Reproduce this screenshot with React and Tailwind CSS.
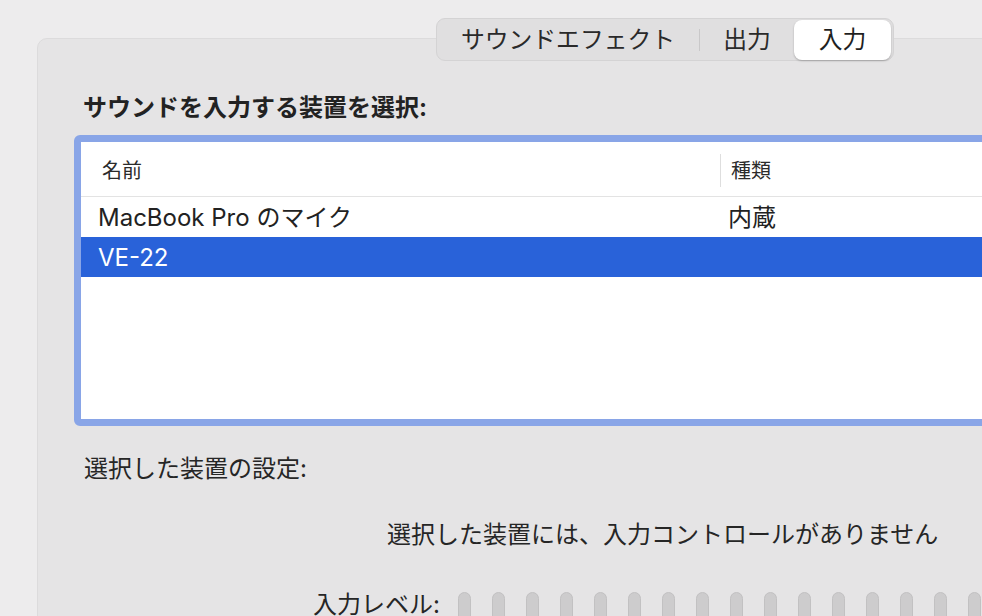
import React from "react";

const font = { fontFamily: 'Inter, "Noto Sans CJK JP", sans-serif' };

const Tabs = () => {
	return (
		<div className="ml-[362px] -mt-[21px] flex h-[43px] w-[458px] items-center rounded-[9px] border border-[#d4d3d4] bg-[#e0dfe0]">
			<div className="flex h-full w-[262px] items-center justify-center text-[23.8px] text-[#2a2a2a]">
				サウンドエフェクト
			</div>
			<div className="h-[22px] w-px bg-[#c9c8c9]" />
			<div className="flex h-full w-[94px] items-center justify-center text-[23.8px] text-[#2a2a2a]">
				出力
			</div>
			<div className="flex h-[40px] w-[97px] items-center justify-center rounded-[8px] bg-white text-[23.8px] text-[#1f1f1f] shadow-[0_1px_2px_rgba(0,0,0,0.25)]">
				入力
			</div>
		</div>
	);
};

const DeviceTable = () => {
	return (
		<div className="mt-[11px] h-[291px] w-[1000px] rounded-[6px] border-[7px] border-[#89a5e7] bg-white">
			<div className="flex h-[55px] items-center border-b border-[#e3e3e3] pt-[3px]">
				<div className="w-[639px] pl-[21px] text-[20px] text-[#2b2b2b]">名前</div>
				<div className="h-[33px] w-px bg-[#dedede]" />
				<div className="pl-[10px] text-[20px] text-[#2b2b2b]">種類</div>
			</div>
			<div className="flex h-[40px] items-center pt-[1px] text-[24px] text-[#222]">
				<div className="w-[647px] pl-[17px]">MacBook Pro のマイク</div>
				<div>内蔵</div>
			</div>
			<div className="flex h-[40px] items-center pt-[1px] bg-[#2962d9] text-[24px] text-white">
				<div className="w-[647px] pl-[17px]">VE-22</div>
			</div>
		</div>
	);
};

const LevelMeter = () => {
	const pills = Array.from({ length: 16 });
	return (
		<div className="mt-[41px] flex h-[26px] items-start">
			<div className="ml-[239px] text-[24px] leading-[26px] text-[#262626]">入力レベル:</div>
			<div className="ml-[18px] mt-[0px] flex gap-[21px]">
				{pills.map((_, i) => (
					<div
						key={i}
						className="h-[30px] w-[13px] rounded-t-full border border-[#c2c1c2] bg-[#cdcccd]"
					/>
				))}
			</div>
		</div>
	);
};

const App = () => {
	return (
		<div className="h-[616px] w-[982px] overflow-hidden bg-[#edeced] pl-[37px] pt-[38px]" style={font}>
			<div className="h-[700px] w-[1100px] rounded-tl-[10px] border border-[#dcdbdc] bg-[#e5e4e5] pl-[36px]">
				<Tabs />
				<div className="ml-[9px] mt-[31px] text-[24px] font-bold leading-[32px] text-[#222]">
					サウンドを入力する装置を選択:
				</div>
				<DeviceTable />
				<div className="ml-[10px] mt-[27px] text-[24px] leading-[32px] text-[#262626]">
					選択した装置の設定:
				</div>
				<div className="ml-[313px] mt-[34px] text-[24px] leading-[32px] text-[#262626]">
					選択した装置には、入力コントロールがありません
				</div>
				<LevelMeter />
			</div>
		</div>
	);
};

export default App;
